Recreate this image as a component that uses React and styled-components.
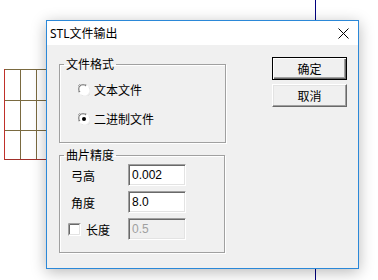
import React from "react";
import styled, { createGlobalStyle } from "styled-components";

const Global = createGlobalStyle`
  html, body {
    margin: 0;
    padding: 0;
    background: #fff;
  }
  body {
    font-family: "Noto Sans CJK SC", "Liberation Sans", sans-serif;
    font-size: 12px;
    color: #000;
  }
`;

// desktop behind the dialog
const Desktop = styled.div`
  position: relative;
  width: 378px;
  height: 280px;
  overflow: hidden;
  background: #fff;
`;

const Drawing = styled.svg`
  position: absolute;
  left: 0;
  top: 0;
`;

const Window = styled.div`
  position: absolute;
  left: 46px;
  top: 20px;
  width: 313px;
  height: 249px;
  box-sizing: border-box;
  border: 1px solid #2b88d8;
  background: #f0f0f0;
  box-shadow: 0 3px 14px rgba(0, 0, 0, 0.28);
  display: flex;
  flex-direction: column;
`;

const TitleBar = styled.div`
  height: 24px;
  background: #fff;
  display: flex;
  align-items: center;
  justify-content: space-between;
  padding: 0 9px 0 3px;
  font-family: "Noto Sans", "Noto Sans CJK SC", sans-serif;
  font-size: 12px;
`;

const CloseX = styled.svg`
  display: block;
`;

const Body = styled.div`
  flex: 1;
  display: flex;
  justify-content: space-between;
  padding: 11px 11px 0 12px;
`;

const Column = styled.div`
  display: flex;
  flex-direction: column;
  gap: 4px;
`;

const Group = styled.fieldset`
  margin: 0;
  padding: 0;
  width: ${p => p.$w}px;
  height: ${p => p.$h}px;
  box-sizing: border-box;
  border: 1px solid #a0a0a0;
  box-shadow: inset 1px 1px 0 #fff, 1px 1px 0 #fff;
  min-width: 0;
`;

const Legend = styled.legend`
  margin-left: 4px;
  padding: 0 2px;
  font-size: 12px;
  line-height: 16px;
`;

const RadioList = styled.div`
  display: flex;
  flex-direction: column;
  gap: 13px;
  padding: 10px 0 0 18px;
`;

const Option = styled.div`
  display: flex;
  align-items: center;
  gap: 4px;
  height: 16px;
  line-height: 16px;
`;

const Rows = styled.div`
  display: flex;
  flex-direction: column;
  gap: 5px;
  padding: 0 0 0 8px;
  margin-top: 1px;
`;

const Row = styled.div`
  display: flex;
  align-items: center;
  height: 22px;
`;

const Label = styled.div`
  display: flex;
  align-items: center;
  gap: 5px;
  width: ${p => (p.$check ? 60 : 57)}px;
  padding-left: ${p => (p.$check ? 0 : 3)}px;
`;

const Field = styled.div`
  width: 58px;
  height: 22px;
  box-sizing: border-box;
  border: 1px solid;
  border-color: #a0a0a0 #fff #fff #a0a0a0;
  box-shadow: inset 1px 1px 0 #696969, inset -1px -1px 0 #e3e3e3;
  background: ${p => (p.$disabled ? "#f0f0f0" : "#fff")};
  color: ${p => (p.$disabled ? "#a0a0a0" : "#000")};
  font-family: "Liberation Sans", Arial, sans-serif;
  font-size: 12px;
  line-height: 20px;
  padding-left: 3px;
`;

const Buttons = styled.div`
  display: flex;
  flex-direction: column;
  gap: 4px;
  padding-top: 1px;
`;

const Button = styled.div`
  width: 75px;
  height: 23px;
  box-sizing: border-box;
  display: flex;
  align-items: center;
  justify-content: center;
  background: #f0f0f0;
  font-size: 12px;
  border: 1px solid;
  border-color: ${p => (p.$default ? "#000" : "#fff #696969 #696969 #fff")};
  box-shadow: ${p =>
    p.$default
      ? "inset 1px 1px 0 #fff, inset -1px -1px 0 #696969, inset -2px -2px 0 #a0a0a0"
      : "inset -1px -1px 0 #a0a0a0, inset 1px 1px 0 #e3e3e3"};
`;

function Radio({ checked }) {
  return (
    <svg width="12" height="12" viewBox="0 0 12 12">
      <circle cx="6" cy="6" r="5.5" fill="#fff" />
      <path d="M1 8.5 A5.2 5.2 0 0 1 8.5 1" fill="none" stroke="#a0a0a0" strokeWidth="1" />
      <path d="M2 8 A4.2 4.2 0 0 1 8 2" fill="none" stroke="#696969" strokeWidth="1" />
      <path d="M3.5 11 A5.2 5.2 0 0 0 11 3.5" fill="none" stroke="#e3e3e3" strokeWidth="1" />
      {checked && <circle cx="6" cy="6" r="2" fill="#000" />}
    </svg>
  );
}

function Check() {
  return (
    <svg width="13" height="13" viewBox="0 0 13 13">
      <rect x="0" y="0" width="13" height="13" fill="#fff" />
      <path d="M0.5 12.5 V0.5 H12.5" fill="none" stroke="#a0a0a0" />
      <path d="M1.5 11.5 V1.5 H11.5" fill="none" stroke="#696969" />
      <path d="M1.5 11.5 H11.5 V1.5" fill="none" stroke="#e3e3e3" />
    </svg>
  );
}

function Grid() {
  const cols = [4.5, 20.5, 36.5, 52.5];
  const rows = [69.5, 100.5, 130.5];
  return (
    <Drawing width="378" height="280">
      <line x1="315.5" y1="0" x2="315.5" y2="280" stroke="#00007f" />
      {rows.map(y => (
        <line key={y} x1="4" y1={y} x2="60" y2={y} stroke="#7a6a40" />
      ))}
      {cols.slice(1).map(x => (
        <line key={x} x1={x} y1="69" x2={x} y2="160" stroke="#7a6a40" />
      ))}
      <line x1="4" y1="159.5" x2="60" y2="159.5" stroke="#a0302a" />
      <line x1="4.5" y1="69" x2="4.5" y2="160" stroke="#c0302a" />
    </Drawing>
  );
}

export default function App() {
  return (
    <Desktop>
      <Global />
      <Grid />
      <Window>
        <TitleBar>
          <span>STL文件输出</span>
          <CloseX width="11" height="11" viewBox="0 0 11 11">
            <path d="M0.5 0.5 L10.5 10.5 M10.5 0.5 L0.5 10.5" stroke="#000" strokeWidth="1" />
          </CloseX>
        </TitleBar>
        <Body>
          <Column>
            <Group $w={167} $h={87}>
              <Legend>文件格式</Legend>
              <RadioList>
                <Option>
                  <Radio />
                  <span>文本文件</span>
                </Option>
                <Option>
                  <Radio checked />
                  <span>二进制文件</span>
                </Option>
              </RadioList>
            </Group>
            <Group $w={166} $h={106}>
              <Legend>曲片精度</Legend>
              <Rows>
                <Row>
                  <Label>弓高</Label>
                  <Field>0.002</Field>
                </Row>
                <Row>
                  <Label>角度</Label>
                  <Field>8.0</Field>
                </Row>
                <Row>
                  <Label $check>
                    <Check />
                    <span>长度</span>
                  </Label>
                  <Field $disabled>0.5</Field>
                </Row>
              </Rows>
            </Group>
          </Column>
          <Buttons>
            <Button $default>确定</Button>
            <Button>取消</Button>
          </Buttons>
        </Body>
      </Window>
    </Desktop>
  );
}
